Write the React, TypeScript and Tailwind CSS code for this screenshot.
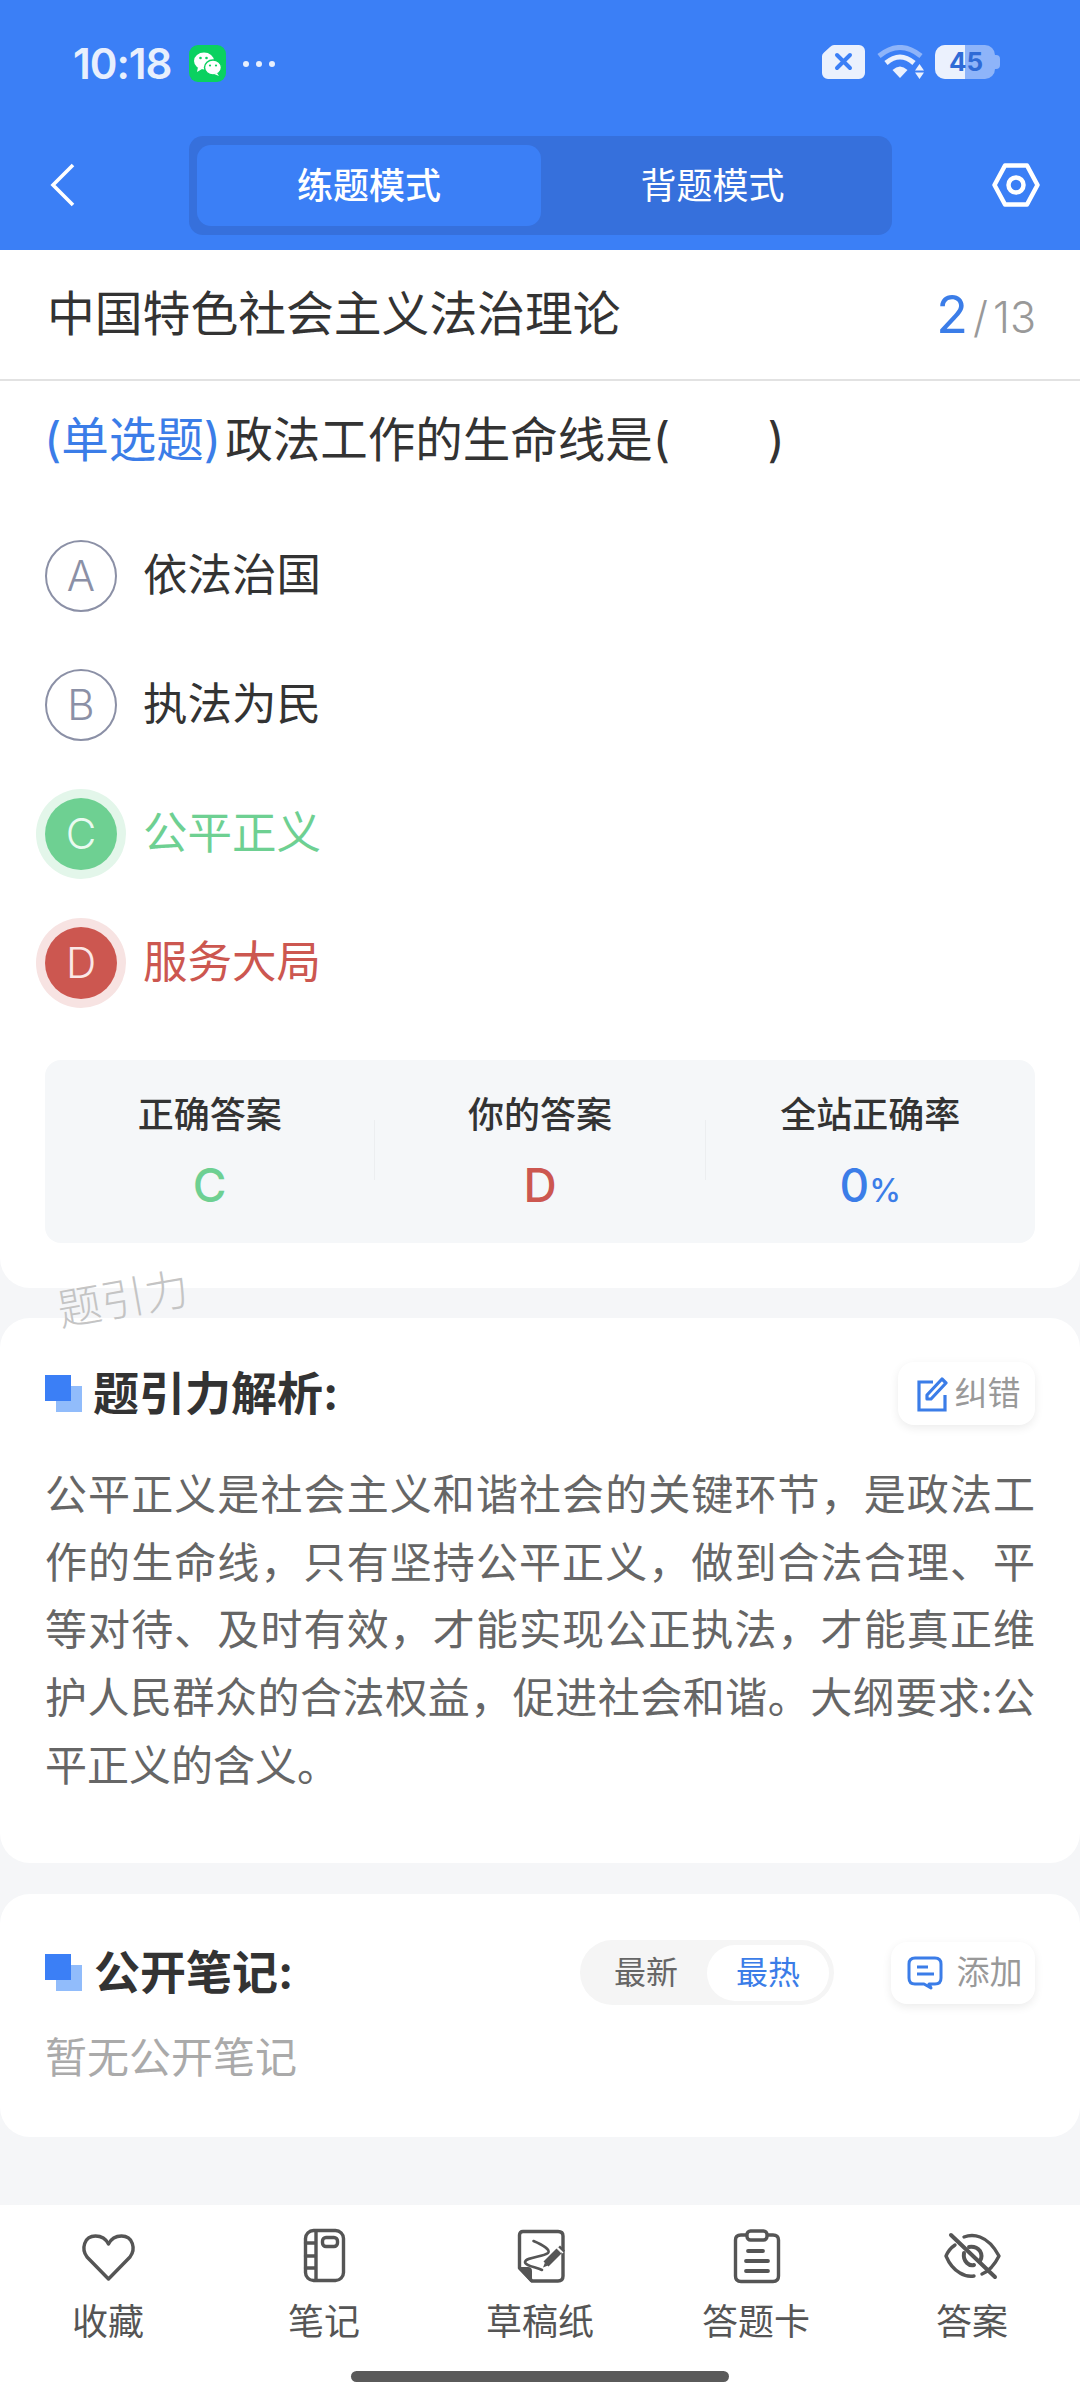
import React from "react";

const FONT = "font-['Inter','Noto_Sans_CJK_SC',sans-serif]";

function WeChat() {
  return (
    <svg width="37" height="37" viewBox="0 0 37 37" className="block">
      <rect width="37" height="37" rx="9" fill="#0ad160" />
      <ellipse cx="15" cy="16" rx="10" ry="8.5" fill="#fff" />
      <path d="M9 22l-1 5 5-3z" fill="#fff" />
      <ellipse cx="24" cy="22.5" rx="8.5" ry="7.5" fill="#fff" stroke="#0ad160" strokeWidth="1.5" />
      <path d="M28 28l2 3-5-2z" fill="#fff" />
      <circle cx="11.5" cy="13" r="1.3" fill="#0ad160" />
      <circle cx="17.5" cy="13" r="1.3" fill="#0ad160" />
      <circle cx="21" cy="20.5" r="1.1" fill="#0ad160" />
      <circle cx="27" cy="20.5" r="1.1" fill="#0ad160" />
    </svg>
  );
}

function StatusIcons() {
  return (
    <div className="flex items-center gap-3">
      <svg width="43" height="34" viewBox="0 0 43 34" className="block">
        <path d="M12 0H37a6 6 0 0 1 6 6V28a6 6 0 0 1-6 6H6a6 6 0 0 1-6-6V11Q0 9 2 7.5L8 2Q10 0 12 0Z" fill="#ebf1fd" />
        <path d="M15 10l13 13M28 10L15 23" stroke="#3b7ff6" strokeWidth="4" strokeLinecap="round" />
      </svg>
      <svg width="48" height="34" viewBox="0 0 48 34" className="block">
        <path d="M2 11Q23 -6 44 11" fill="none" stroke="#8eb4f9" strokeWidth="5" />
        <path d="M9 18Q23 6 37 18" fill="none" stroke="#ebf1fd" strokeWidth="5" />
        <path d="M15.5 25Q23 18 30.5 25L23 33Z" fill="#ebf1fd" />
        <path d="M38 25.5L42.5 19L47 25.5ZM38 27.5H47L42.5 34Z" fill="#ebf1fd" />
      </svg>
      <div className="relative ml-[-2px] h-[34px] w-[65px]">
        <div className="absolute left-0 top-0 flex h-full w-[60px] overflow-hidden rounded-[10px] bg-[#8eb4f9]">
          <div className="h-full w-[30px] bg-[#ebf1fd]" />
        </div>
        <div className="absolute right-0 top-[10px] h-[14px] w-[6px] rounded-r-[4px] bg-[#8eb4f9]" />
        <div className="absolute left-[14px] top-0 flex h-full items-center text-[26px] font-bold leading-none text-[#2f6bd6]">45</div>
      </div>
    </div>
  );
}

function Hexagon() {
  return (
    <svg width="48" height="44" viewBox="0 0 48 44" className="block">
      <path d="M13 2.5H35L45.5 22L35 41.5H13L2.5 22Z" fill="none" stroke="#fff" strokeWidth="4.5" strokeLinejoin="round" />
      <circle cx="24" cy="22" r="7.5" fill="none" stroke="#fff" strokeWidth="4.5" />
    </svg>
  );
}

function Option({ letter, text, tone }: { letter: string; text: string; tone: "plain" | "right" | "wrong" }) {
  const circle =
    tone === "plain"
      ? "border-2 border-[#8b90a6] text-[#8b90a6]"
      : tone === "right"
        ? "bg-[#6ed092] text-[#eafaf0] shadow-[0_0_0_9px_#e3f6ea]"
        : "bg-[#cc5750] text-[#fbe8e7] shadow-[0_0_0_9px_#f7e3e2]";
  const label = tone === "plain" ? "text-[#333]" : tone === "right" ? "text-[#6ed092]" : "text-[#cc5750]";
  return (
    <div className="flex h-[129px] items-center">
      <div className={`flex h-[72px] w-[72px] items-center justify-center rounded-full text-[42px] font-light ${circle}`}>{letter}</div>
      <div className={`ml-[26px] text-[44.5px] ${label}`}>{text}</div>
    </div>
  );
}

function Stat({ label, children }: { label: string; children: React.ReactNode }) {
  return (
    <div className="flex flex-1 flex-col items-center">
      <div className="text-[36px] font-medium leading-[44px] text-[#333]">{label}</div>
      <div className="mt-[26px] flex h-[44px] items-baseline text-[46px] font-medium leading-[44px]">{children}</div>
    </div>
  );
}

function SectionMark() {
  return (
    <div className="relative h-[37px] w-[37px] shrink-0">
      <div className="absolute bottom-0 right-0 h-[26px] w-[26px] bg-[#91bcfb]" />
      <div className="absolute left-0 top-0 h-[26px] w-[26px] bg-[#3b7ff6]" />
    </div>
  );
}

function Tab({ label, icon }: { label: string; icon: React.ReactNode }) {
  return (
    <div className="flex w-[216px] flex-col items-center">
      <div className="h-[60px] w-[60px]">{icon}</div>
      <div className="mt-[11px] text-[36px] leading-[50px] text-[#555]">{label}</div>
    </div>
  );
}

const st = { fill: "none", stroke: "#555", strokeWidth: 3.4, strokeLinecap: "round" as const, strokeLinejoin: "round" as const };

const HeartIcon = (
  <svg width="60" height="60" viewBox="0 0 60 60" className="block">
    <path d="M30.5 53L9 31C3 23 6 10 17.5 10C24 10 28 13 30.5 18C33 13 37 10 43.5 10C55 10 58 23 52 31Z" {...st} />
  </svg>
);
const NoteIcon = (
  <svg width="60" height="60" viewBox="0 0 60 60" className="block">
    <rect x="11.5" y="4.5" width="38" height="50" rx="8" {...st} />
    <path d="M22 5V54M11.5 17H22M11.5 30H22M11.5 42H22" {...st} />
    <rect x="28.5" y="11.5" width="15" height="9" rx="3.5" {...st} />
  </svg>
);
const DraftIcon = (
  <svg width="60" height="60" viewBox="0 0 60 60" className="block">
    <path d="M13 5.5H48Q53 5.5 53 10V50Q53 55 48 55H22L9.5 42V9Q9.5 5.5 13 5.5Z" {...st} />
    <path d="M9.5 42H18Q21 42 21 45V55Z" fill="#555" stroke="#555" strokeWidth="2" strokeLinejoin="round" />
    <path d="M23.5 15C33 19 41 24 38 27C33 31 16 31 15 36C15 40 26 41 32 44" fill="none" stroke="#555" strokeWidth="2.6" strokeLinecap="round" />
    <path d="M36 38L49 25" stroke="#555" strokeWidth="7" />
    <path d="M33 41.5L35 36.5L38 39.5Z" fill="#555" />
    <path d="M50 24.5L52.5 22" stroke="#555" strokeWidth="7" />
    <path d="M47.5 21.5L53 27" stroke="#fff" strokeWidth="1.4" />
  </svg>
);
const CardIcon = (
  <svg width="60" height="60" viewBox="0 0 60 60" className="block">
    <path d="M20 9H15Q9.5 9 9.5 14V50Q9.5 55.5 15 55.5H47Q52.5 55.5 52.5 50V14Q52.5 9 47 9H42" {...st} />
    <rect x="21" y="5" width="20" height="9" rx="3.5" {...st} />
    <path d="M22 25H37M20 35H42M20 45H42" {...st} strokeWidth={3.8} />
  </svg>
);
const EyeIcon = (
  <svg width="60" height="60" viewBox="0 0 60 60" className="block">
    <path d="M22 11Q30 8 38 11Q49 15 57 30Q50 44 40 48M32 50Q24 51 18 47Q9 42 4 30Q7 23 13 19" {...st} />
    <path d="M9 9L53 51" {...st} strokeWidth={4} />
    <path d="M27 21Q34 20 38 25Q41 30 38 35" {...st} strokeWidth={4} />
    <path d="M22 27Q21 33 25 37Q28 40 32 39" {...st} strokeWidth={4} />
  </svg>
);

export default function App() {
  return (
    <div className={`relative flex h-[2400px] w-[1080px] flex-col overflow-hidden bg-[#f5f6f8] ${FONT}`}>
      <header className="h-[250px] shrink-0 bg-[#3b7ff6]">
        <div className="flex h-[136px] items-start justify-between pl-[73px] pr-[80px] pt-[45px]">
          <div className="flex items-center">
            <span className="text-[42px] font-semibold leading-[37px] tracking-[-1px] text-[#e8effd]">10:18</span>
            <span className="ml-[17px]"><WeChat /></span>
            <span className="ml-[17px] flex gap-[7px]">
              <i className="h-[6px] w-[6px] rounded-full bg-[#e8effd]" />
              <i className="h-[6px] w-[6px] rounded-full bg-[#e8effd]" />
              <i className="h-[6px] w-[6px] rounded-full bg-[#e8effd]" />
            </span>
          </div>
          <StatusIcons />
        </div>
        <div className="flex h-[99px] items-start">
          <div className="ml-[50px] mt-[27px] w-[139px] shrink-0">
            <svg width="26" height="44" viewBox="0 0 26 44" className="block">
              <path d="M23 2L3 22L23 42" fill="none" stroke="#fff" strokeWidth="3.6" />
            </svg>
          </div>
          <div className="flex h-[99px] w-[703px] shrink-0 items-center rounded-[14px] bg-[#3670dc] pl-[8px] pr-[8px]">
            <div className="flex h-[81px] w-[344px] items-center justify-center rounded-[14px] bg-[#3b7ff6] text-[36px] font-medium text-white">练题模式</div>
            <div className="flex h-[81px] flex-1 items-center justify-center text-[36px] text-white">背题模式</div>
          </div>
          <div className="ml-[100px] mt-[27px]"><Hexagon /></div>
        </div>
      </header>

      <section className="shrink-0 rounded-b-[30px] bg-white">
        <div className="flex h-[131px] items-center justify-between border-b-2 border-[#e2e2e2] pl-[47px] pr-[44px]">
          <div className="text-[47.8px] text-[#333]">中国特色社会主义法治理论</div>
          <div className="flex items-baseline font-light">
            <span className="text-[52px] font-normal text-[#3b7de8]">2</span>
            <span className="ml-[5px] text-[43px] text-[#999]">/</span>
            <span className="ml-[5px] text-[43px] text-[#999]">13</span>
          </div>
        </div>
        <div className="pl-[44px] pr-[45px]">
          <div className="flex h-[118px] items-center whitespace-pre text-[47.5px] text-[#333]">
            <span className="text-[#3b7de8]">(单选题)</span>
            <span className="ml-[4px]">政法工作的生命线是(       </span>
            <span className="ml-[4px]">)</span>
          </div>
          <div className="ml-[1px] mt-[12px]">
            <Option letter="A" text="依法治国" tone="plain" />
            <Option letter="B" text="执法为民" tone="plain" />
            <Option letter="C" text="公平正义" tone="right" />
            <Option letter="D" text="服务大局" tone="wrong" />
          </div>
          <div className="ml-[1px] mt-[33px] flex h-[183px] items-center rounded-[16px] bg-[#f5f7f9] pb-[4px]">
            <Stat label="正确答案"><span className="text-[#6ed092]">C</span></Stat>
            <div className="h-[60px] w-px bg-[#eceef0]" />
            <Stat label="你的答案"><span className="text-[#cc5750]">D</span></Stat>
            <div className="h-[60px] w-px bg-[#eceef0]" />
            <Stat label="全站正确率">
              <span className="text-[#3b7de8]">0</span>
              <span className="text-[32px] text-[#3b7de8]">%</span>
            </Stat>
          </div>
        </div>
        <div className="h-[45px]" />
      </section>

      <section className="mt-[30px] h-[545px] shrink-0 rounded-[30px] bg-white px-[45px] pt-[44px]">
        <div className="flex h-[63px] items-center">
          <SectionMark />
          <div className="ml-[11px] text-[46px] font-bold text-[#333]">题引力解析:</div>
          <div className="ml-auto flex h-[63px] w-[137px] items-center justify-center gap-[7px] rounded-[16px] bg-white pl-[3px] shadow-[0_3px_10px_rgba(0,0,0,0.08)]">
            <svg width="32" height="36" viewBox="0 0 32 36" className="block">
              <path d="M17 6H3V34H29V19" fill="none" stroke="#3b7de8" strokeWidth="3.2" />
              <path d="M11 19L26 3L30 7L15 23H11Z" fill="none" stroke="#3b7de8" strokeWidth="3.2" strokeLinejoin="round" />
            </svg>
            <span className="text-[33px] text-[#999]">纠错</span>
          </div>
        </div>
        <p className="mt-[36px] text-justify text-[42px] leading-[67.7px] text-[#666]">
          公平正义是社会主义和谐社会的关键环节，是政法工作的生命线，只有坚持公平正义，做到合法合理、平等对待、及时有效，才能实现公正执法，才能真正维护人民群众的合法权益，促进社会和谐。大纲要求:公平正义的含义。
        </p>
      </section>

      <section className="mt-[31px] h-[243px] shrink-0 rounded-[30px] bg-white px-[45px] pt-[46px]">
        <div className="flex h-[65px] items-center">
          <SectionMark />
          <div className="ml-[12px] text-[46px] font-bold text-[#333]">公开笔记:</div>
          <div className="ml-auto flex h-[65px] w-[254px] items-center rounded-full bg-[#f5f5f5] pl-[5px] pr-[5px]">
            <div className="flex h-[56px] flex-1 items-center justify-center text-[32px] text-[#666]">最新</div>
            <div className="flex h-[56px] w-[122px] items-center justify-center rounded-full bg-white text-[32px] text-[#3b7de8]">最热</div>
          </div>
          <div className="ml-[57px] flex h-[62px] w-[144px] items-center justify-center gap-[14px] rounded-[16px] bg-white pl-[3px] shadow-[0_3px_10px_rgba(0,0,0,0.08)]">
            <svg width="36" height="34" viewBox="0 0 36 34" className="block">
              <path d="M8 2H28Q34 2 34 8V22Q34 28 28 28H26L22 28L24 32L17 28H8Q2 28 2 22V8Q2 2 8 2Z" fill="none" stroke="#3b7de8" strokeWidth="3" strokeLinejoin="round" />
              <path d="M10 11H21M10 18H27" stroke="#3b7de8" strokeWidth="3" />
            </svg>
            <span className="text-[33px] text-[#999]">添加</span>
          </div>
        </div>
        <div className="mt-[21px] text-[42px] text-[#aaa]">暂无公开笔记</div>
      </section>

      <nav className="mt-auto h-[195px] shrink-0 bg-white pt-[21px]">
        <div className="flex">
          <Tab label="收藏" icon={HeartIcon} />
          <Tab label="笔记" icon={NoteIcon} />
          <Tab label="草稿纸" icon={DraftIcon} />
          <Tab label="答题卡" icon={CardIcon} />
          <Tab label="答案" icon={EyeIcon} />
        </div>
        <div className="mx-auto mt-[24px] h-[11px] w-[378px] rounded-full bg-[#5a5a5a]" />
      </nav>

      <div className="absolute left-[57px] top-[1266px] -rotate-[10deg] text-[44px] font-light text-[#c4c4c4]">题引力</div>
    </div>
  );
}
